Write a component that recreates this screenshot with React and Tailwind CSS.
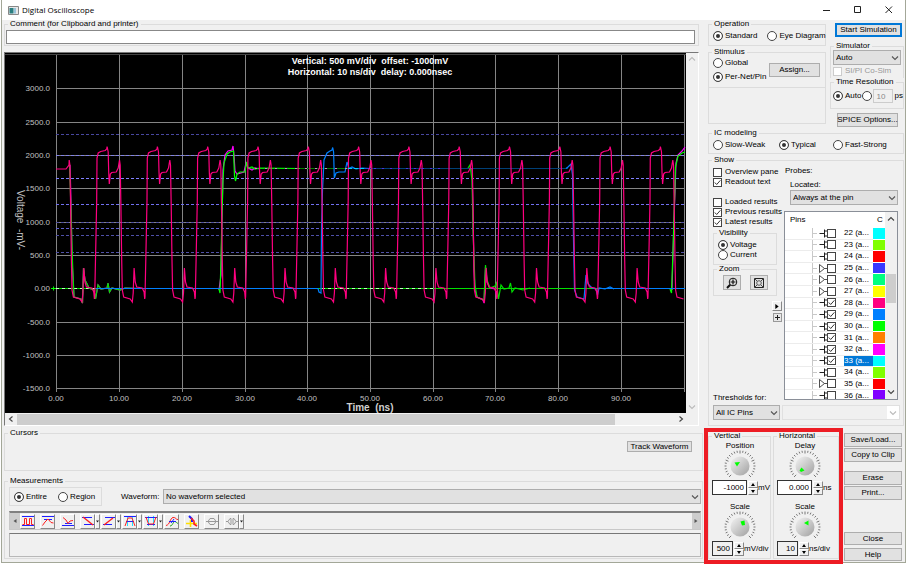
import { useState } from 'react'
import clsx from 'clsx'

const PINS = [
  { id: 22, kind: 'io', on: false, swatch: 'bg-[#00ffff]' },
  { id: 23, kind: 'io', on: false, swatch: 'bg-[#80ff00]' },
  { id: 24, kind: 'io', on: false, swatch: 'bg-[#ff0000]' },
  { id: 25, kind: 'in', on: false, swatch: 'bg-[#3838ff]' },
  { id: 26, kind: 'in', on: false, swatch: 'bg-[#00ff80]' },
  { id: 27, kind: 'in', on: false, swatch: 'bg-[#ffff00]' },
  { id: 28, kind: 'io', on: true, swatch: 'bg-[#ff0080]' },
  { id: 29, kind: 'io', on: true, swatch: 'bg-[#0080ff]' },
  { id: 30, kind: 'io', on: true, swatch: 'bg-[#00ff00]' },
  { id: 31, kind: 'io', on: true, swatch: 'bg-[#ff8000]' },
  { id: 32, kind: 'io', on: true, swatch: 'bg-[#ff00ff]' },
  { id: 33, kind: 'io', on: true, swatch: 'bg-[#00ffff]' },
  { id: 34, kind: 'io', on: false, swatch: 'bg-[#80ff00]' },
  { id: 35, kind: 'in', on: false, swatch: 'bg-[#ff0000]' },
  { id: 36, kind: 'io', on: false, swatch: 'bg-[#8000ff]' },
]

const Y_TICKS = [
  ['3000.0', 88], ['2500.0', 122], ['2000.0', 155], ['1500.0', 188], ['1000.0', 222],
  ['500.0', 255], ['0.00', 288], ['-500.0', 322], ['-1000.0', 355], ['-1500.0', 388],
]

const X_TICKS = [
  ['0.00', 56], ['10.00', 119], ['20.00', 182], ['30.00', 245], ['40.00', 307], ['50.00', 370],
  ['60.00', 433], ['70.00', 495], ['80.00', 558], ['90.00', 621], ['', 684],
]

const THRESHOLDS = [
  [134, '#4848a0'], [155, '#8080e8'], [178, '#8080ff'], [204, '#7070f0'],
  [222, '#5050a0'], [228, '#6060d0'], [235, '#5050a8'], [252, '#5050a8'],
]

// One bit pair of the clock net, x relative to its rising edge
const CLOCK = [
  [-2, 297], [-1, 250], [0, 200], [0.3, 158], [1.5, 153], [4, 151.5], [8.5, 150.5], [10, 149], [10.4, 146.5],
  [11.5, 152], [12, 172], [12.6, 184], [13.6, 174], [15, 172.5], [19.5, 172], [21.5, 168], [22.8, 160],
  [23.5, 165], [24.2, 205], [25, 260], [25.6, 290], [27, 297], [33.5, 299], [35.6, 302], [36.5, 293],
  [37.4, 268], [38.5, 282], [40, 287], [45.5, 288], [47.4, 292], [48, 299],
]

const toPoints = (pts) => pts.map((p) => p.join(',')).join(' ')

const clockPoints = () => {
  const pts = [[56, 169], [66, 169], [69, 165]]
  for (let n = -1; n < 12; n++) {
    const rise = 96.7 + n * 50.3
    for (const [dx, y] of CLOCK) {
      const x = Math.round((rise + dx) * 10) / 10
      if (x > 69 && x < 685) pts.push([x, y])
    }
  }
  return toPoints(pts)
}

const SETTLE = '74,297 81,299 82.5,303 83.5,268 85,280 89,288 94,290 95.5,299 98,285 101,289 107,288 108,283 109.5,292 112,288 120,290 125,288 140,288.5'

function Group({ title, className, children }) {
  return (
    <fieldset className={clsx('min-w-0 border border-[#dcdcdc]', className)}>
      <legend className="ml-[3px] h-[8px] px-[2px] leading-[8px]">{title}</legend>
      {children}
    </fieldset>
  )
}

function Radio({ name, label, checked, className }) {
  return (
    <label className={clsx('flex items-center gap-[2px] whitespace-nowrap', className)}>
      <input
        type="radio"
        name={name}
        defaultChecked={checked}
        className="size-[10px] shrink-0 appearance-none rounded-full border border-[#444] bg-white checked:bg-[#333] checked:shadow-[inset_0_0_0_2px_white]"
      />
      {label}
    </label>
  )
}

function Tick({ checked, disabled, label }) {
  return (
    <span className="relative grid size-[9px] shrink-0">
      <input
        type="checkbox"
        aria-label={label}
        defaultChecked={checked}
        disabled={disabled}
        className="peer size-[9px] appearance-none border border-[#444] bg-white disabled:border-[#ccc]"
      />
      <svg viewBox="0 0 9 9" className="pointer-events-none absolute inset-0 hidden size-[9px] peer-checked:block">
        <path d="M1.8 4.5 L3.7 6.5 L7.4 2.3" fill="none" stroke="#333" strokeWidth="1" />
      </svg>
    </span>
  )
}

function Check({ label, checked, disabled }) {
  return (
    <label className={clsx('flex h-[10px] items-center gap-[3px] whitespace-nowrap', disabled && 'text-[#999]')}>
      <Tick checked={checked} disabled={disabled} />
      {label}
    </label>
  )
}

function Chevron({ className, d = 'M1 2.5 L4 5.5 L7 2.5' }) {
  return (
    <svg viewBox="0 0 8 8" className={clsx('size-[8px]', className)}>
      <path d={d} fill="none" stroke="currentColor" strokeWidth="1.1" />
    </svg>
  )
}

function Combo({ label, value, className }) {
  return (
    <span className={clsx('relative flex h-[15px]', className)}>
      <select aria-label={label} className="w-full appearance-none border border-[#adadad] bg-[#e1e1e1] pl-[2px]">
        <option>{value}</option>
      </select>
      <Chevron className="pointer-events-none absolute top-[4px] right-[2px] text-[#555]" />
    </span>
  )
}

function Button({ className, children, ...rest }) {
  return (
    <button
      type="button"
      className={clsx('flex items-center justify-center border border-[#adadad] bg-[#e1e1e1] whitespace-nowrap', className)}
      {...rest}
    >
      {children}
    </button>
  )
}

function Plot() {
  return (
    <svg viewBox="5 53 681 360" className="block min-w-0 flex-1 bg-black" role="img" aria-label="Waveform plot">
      <g stroke="#858585" strokeWidth="1">
        {Y_TICKS.map(([label, y]) => (
          <line key={label} x1="56" x2="685" y1={y + 0.5} y2={y + 0.5} />
        ))}
        {X_TICKS.map(([label, x]) => (
          <line key={x} x1={x + 0.5} x2={x + 0.5} y1="54" y2="392" />
        ))}
        <line x1="5" x2="686" y1="54.5" y2="54.5" stroke="#444" />
      </g>
      {THRESHOLDS.map(([y, color]) => (
        <line key={y} x1="56" x2="685" y1={y + 0.5} y2={y + 0.5} stroke={color} strokeDasharray="3 2" />
      ))}

      <g fill="none" strokeWidth="1.2">
        {/* flat levels */}
        <path d="M250 168.5H350" stroke="#008000" />
        <path d="M348 168.5H568" stroke="#004078" />
        <path d="M56 288.5H685" stroke="#00e000" />
        <path d="M56 288.5H96M322 288.5H436" stroke="#c0ffc0" strokeDasharray="3 3" />
        {/* 32: magenta */}
        <polyline stroke="#e000e0" points={`70,165 71,200 72,260 ${SETTLE}`} />
        <polyline
          stroke="#ff00ff"
          points="219,290 221,275 222,220 223,170 225,155 228,151 232,150 233,146 234,155 235,171 237,174 244,172 246,163 248,168 252,170 255,168 260,169"
        />
        <polyline stroke="#e000e0" points="472,168 473,210 474,270 475,290 477,297 483,300 484,303 485.5,267 487,282 490,288 495,289 497,297" />
        <polyline stroke="#ff00ff" points="672,290 674,220 676,163 678,155 682,151 685,147" />
        {/* 30: green */}
        <polyline stroke="#00e000" points={`69.5,164 71,210 72.5,262 ${SETTLE}`} />
        <polyline
          stroke="#00ff00"
          points="219,289 220,293 221,260 222,215 223,180 224,163 227,154 230,152 233.5,151 234.5,176 235.5,181 237,174 240,172 245,172 246.5,162 248,168 252,167 255,169 260,168 300,168.5"
        />
        <polyline
          stroke="#00e000"
          points="468,168 470,165 472,180 473,230 475,285 477,297 484,300 485.5,265 487,280 490,288 495,286 496.5,283 498.5,299 501,285 504,289 509,288 510.5,283 512,292 515,288 523,290 530,288"
        />
        <polyline stroke="#00ff00" points="670,289 671.5,293 673,250 674.5,200 675.5,167 678,156 682,153 685,152" />
        {/* 29: blue */}
        <path d="M96 288.5H318M600 288.5H685" stroke="#0080ff" />
        <polyline
          stroke="#0080ff"
          points="318,288.5 319,292 321,293 321.5,230 322.5,190 324,160 327,153 330,151 332,150 332.7,147.5 333.6,152 334.3,178 336,173 339,172 345,172 347,162 349,168.5 352,167 356,169 362,168 370,168.5"
        />
        <polyline
          stroke="#0080ff"
          points="566,168.5 568,167 571,164 572.5,175 573.5,240 574.5,290 577,297 584,299 586,275 588,284 592,288 596,289 597.5,295 599,288 605,289 610,287 614,289"
        />
        {/* 28: pink clock */}
        <polyline stroke="#ff0080" points={clockPoints()} />
        <path d="M348 168.5H366" stroke="#00d0ff" strokeDasharray="4 2" />
        <path d="M366 168.5H440" stroke="#5030e0" strokeDasharray="2 6" />
        <path d="M255 168.5H348" stroke="#d070d0" strokeDasharray="2 8" />
      </g>
      <path d="M51 288.5H56M53.5 286.5V290.5" stroke="#00ff00" />

      <g className="text-[8px]" fill="#c0c0c0">
        {Y_TICKS.map(([label, y]) => (
          <text key={label} x="50" y={y + 3} textAnchor="end">{label}</text>
        ))}
        {X_TICKS.map(([label, x]) => (
          <text key={x} x={x} y="401" textAnchor="middle">{label}</text>
        ))}
      </g>
      <text x="370" y="411" textAnchor="middle" fill="#d0d0d0" className="text-[10px] font-bold whitespace-pre">
        {'Time  (ns)'}
      </text>
      <text transform="translate(17 190) rotate(90)" fill="#c0c0c0" className="text-[10px] whitespace-pre">
        {'Voltage  -mV-'}
      </text>
      <g fill="#ffffff" className="text-[9px] font-bold">
        <text x="370" y="64" textAnchor="middle" className="whitespace-pre">
          {'Vertical: 500 mV/div  offset: -1000mV'}
        </text>
        <text x="370" y="75" textAnchor="middle" className="whitespace-pre">
          {'Horizontal: 10 ns/div  delay: 0.000nsec'}
        </text>
      </g>
    </svg>
  )
}

const ICONS = {
  period: (
    <>
      <path d="M0 1.5H12M0 10.5H12" stroke="#2020ff" />
      <path d="M0.5 9.5H2.5V3.5H4.5V9.5H7.5V3.5H9.5V9.5H11.5" stroke="#ff2020" />
    </>
  ),
  max: (
    <>
      <path d="M0 1.5H12M2 4.5H10" stroke="#2020ff" />
      <path d="M0.5 10.5L3 7L6 4L9 7.5L11.5 8" stroke="#ff2020" />
    </>
  ),
  min: (
    <>
      <path d="M0 10.5H12M3 8.5H10" stroke="#2020ff" />
      <path d="M1 2.5L4 5L6 8.5L8 6L11 5.5" stroke="#ff2020" />
    </>
  ),
  fall: (
    <>
      <path d="M0 2.5H10M2 9.5H12" stroke="#2020ff" />
      <path d="M1 2L11 10" stroke="#ff2020" strokeWidth="1.4" />
    </>
  ),
  rise: (
    <>
      <path d="M2 2.5H12M0 9.5H9" stroke="#2020ff" />
      <path d="M1 10L10 3" stroke="#ff2020" strokeWidth="1.4" />
    </>
  ),
  highPulse: (
    <>
      <path d="M3.5 1V11M8.5 1V11" stroke="#20e0ff" />
      <path d="M0 1.5H12M2 6.5H10" stroke="#2020ff" />
      <path d="M1 11L4 3H8L11 11" stroke="#ff2020" />
    </>
  ),
  lowPulse: (
    <>
      <path d="M3.5 1V11M8.5 1V11" stroke="#20e0ff" />
      <path d="M0 2.5H12M2 9.5H10" stroke="#2020ff" />
      <path d="M1 2L3.5 9H8.5L11 2" stroke="#ff2020" />
    </>
  ),
  overshoot: (
    <>
      <path d="M0 10.5C4 10 4 3 7 2.5S10 5 12 4.5" stroke="#ff2020" />
      <path d="M4 11C7 11 7 6 9 6.5S11 9 12 8" stroke="#20a020" />
      <path d="M3 6.5H10M5 8L8 4" stroke="#2020ff" />
    </>
  ),
  eye: (
    <>
      <path d="M0 8.5H11M4.5 5V12" stroke="#ffe000" strokeWidth="1.6" />
      <path d="M3 1L6 4V7" stroke="#2020ff" strokeWidth="2" />
      <path d="M5 3L8 6V9L11 11" stroke="#ff2020" strokeWidth="1.6" />
    </>
  ),
  mask: <path d="M0 6.5H12M2 6.5L4 3.5H8L10 6.5L8 9.5H4Z" stroke="#999" />,
  maskSplit: <path d="M0 6.5H2L4 3.5H5V9.5H4L2 6.5M12 6.5H10L8 3.5H7V9.5H8L10 6.5" stroke="#999" />,
}

const TOOLS = [
  { icon: 'period', label: 'Period', gap: 'ml-0' },
  { icon: 'max', label: 'Maximum', gap: 'ml-[5px]' },
  { icon: 'min', label: 'Minimum', gap: 'ml-[5px]' },
  { icon: 'fall', label: 'Fall time', gap: 'ml-[5px]', menu: true },
  { icon: 'rise', label: 'Rise time', gap: 'ml-px', menu: true },
  { icon: 'highPulse', label: 'High pulse', gap: 'ml-px', menu: true },
  { icon: 'lowPulse', label: 'Low pulse', gap: 'ml-px', menu: true },
  { icon: 'overshoot', label: 'Overshoot', gap: 'ml-px' },
  { icon: 'eye', label: 'Eye crossing', gap: 'ml-[5px]' },
  { icon: 'mask', label: 'Eye mask', gap: 'ml-[5px]' },
  { icon: 'maskSplit', label: 'Mask options', gap: 'ml-[5px]', menu: true },
]

const RAISED = 'border border-t-white border-l-white border-r-[#888] border-b-[#888] bg-[#f0f0f0]'

function Toolbar() {
  return (
    <div className="flex h-[19px] border border-t-2 border-[#c8c8c8] border-t-[#808080]">
      <button type="button" aria-label="Scroll tools left" className="grid w-[10px] place-items-center bg-[#cdcdcd]">
        <svg viewBox="0 0 6 6" className="size-[6px]"><path d="M4.5 1V5L1.5 3Z" fill="#555" /></svg>
      </button>
      <div className="flex flex-1 items-center">
        {TOOLS.map(({ icon, label, gap, menu }) => (
          <span key={icon} className={clsx('flex h-[15px]', gap)}>
            <button type="button" aria-label={label} className={clsx('grid w-[15px] place-items-center', RAISED)}>
              <svg viewBox="0 0 12 12" fill="none" className="size-[12px]">{ICONS[icon]}</svg>
            </button>
            {menu && (
              <button type="button" aria-label={`${label} menu`} className={clsx('grid w-[5px] place-items-center', RAISED)}>
                <svg viewBox="0 0 3 3" className="size-[3px]"><path d="M0 0.5H3L1.5 2.5Z" fill="#222" /></svg>
              </button>
            )}
          </span>
        ))}
      </div>
      <button type="button" aria-label="Scroll tools right" className="grid w-[8px] place-items-center bg-[#cdcdcd]">
        <svg viewBox="0 0 6 6" className="size-[6px]"><path d="M1.5 1V5L4.5 3Z" fill="#555" /></svg>
      </button>
    </div>
  )
}

const KNOB_TICKS = Array.from({ length: 25 }, (_, i) => {
  const a = ((135 + i * 11.25) * Math.PI) / 180
  const inner = i % 6 === 0 ? 12.5 : 13.5
  return [16 + inner * Math.cos(a), 16 + inner * Math.sin(a), 16 + 15.5 * Math.cos(a), 16 + 15.5 * Math.sin(a)]
})

function Knob({ pointer }) {
  return (
    <svg viewBox="0 0 32 30" className="h-[30px] w-[32px]">
      <defs>
        <linearGradient id="knob" x1="0" y1="0" x2="1" y2="1">
          <stop offset="0" stopColor="#f4f4f4" />
          <stop offset="1" stopColor="#a0a0a0" />
        </linearGradient>
      </defs>
      {KNOB_TICKS.map(([x1, y1, x2, y2], i) => (
        <line key={i} x1={x1} y1={y1} x2={x2} y2={y2} stroke="#555" strokeWidth="0.8" />
      ))}
      <circle cx="16" cy="16" r="9.5" fill="url(#knob)" />
      <path d={pointer} fill="#00ff00" />
    </svg>
  )
}

function Dial({ title, label, value, unit, pointer, wide, readOnly }) {
  return (
    <div className="flex flex-col">
      <div className="flex w-[56px] flex-col items-center">
        <span className="leading-[9px]">{title}</span>
        <Knob pointer={pointer} />
      </div>
      <div className="flex items-center">
        <input
          aria-label={label}
          defaultValue={value}
          readOnly={readOnly}
          className={clsx(
            'h-[15px] border border-[#333] pr-[2px] text-right',
            wide ? 'w-[35px] bg-white' : 'w-[21px] bg-[#f0f0f0]',
          )}
        />
        <span className="ml-px flex w-[10px] flex-col">
          <button type="button" aria-label={`${label} up`} className={clsx('grid h-[7px] place-items-center', RAISED)}>
            <svg viewBox="0 0 4 3" className="h-[3px] w-[4px]"><path d="M0 3H4L2 0Z" /></svg>
          </button>
          <button type="button" aria-label={`${label} down`} className={clsx('grid h-[7px] place-items-center', RAISED)}>
            <svg viewBox="0 0 4 3" className="h-[3px] w-[4px]"><path d="M0 0H4L2 3Z" /></svg>
          </button>
        </span>
        <span className="whitespace-nowrap">{unit}</span>
      </div>
    </div>
  )
}

function PinTable() {
  const [selected, setSelected] = useState(33)
  return (
    <div className="mt-[6px] flex h-[189px] overflow-hidden border border-[#8a8f98] bg-white">
      <table className="h-[190px] flex-1 table-fixed border-collapse">
        <thead>
          <tr className="h-[16px]">
            <th className="pl-[5px] text-left font-normal">Pins</th>
            <th className="w-[12px] pl-[4px] text-left font-normal">C</th>
          </tr>
        </thead>
        <tbody>
          {PINS.map(({ id, kind, on, swatch }) => (
            <tr key={id} onClick={() => setSelected(id)}>
              <td className="border-b border-[#ececec] p-0">
                <div className="flex items-center leading-[10px]">
                  <span className="ml-[27px] h-[10px] w-px bg-[#c8c8c8]" />
                  <span className="h-px w-[4px] bg-[#c8c8c8]" />
                  <svg viewBox="0 0 10 9" fill="none" stroke="#222" className="h-[9px] w-[10px]">
                    {kind === 'in' ? (
                      <path d="M2.5 0.5V8.5L7.5 4.5ZM7.5 4.5H10" strokeWidth="0.8" />
                    ) : (
                      <path d="M2.5 4.5H7.5M7.5 0.5V8.5M10 2H7.5M10 7H7.5" />
                    )}
                  </svg>
                  <Tick checked={on} label={`Pin ${id}`} />
                  <span
                    className={clsx(
                      'ml-[8px] flex-1 whitespace-nowrap',
                      selected === id && 'bg-[#0078d7] text-white',
                    )}
                  >
                    {id} (a...
                  </span>
                </div>
              </td>
              <td className={clsx('border-b border-white p-0', swatch)} />
            </tr>
          ))}
        </tbody>
      </table>
      <div className="flex w-[12px] flex-col items-center bg-[#f0f0f0] py-[3px] text-[#444]">
        <Chevron d="M1 5.5 L4 2.5 L7 5.5" />
        <span className="mt-[51px] h-[29px] w-[10px] bg-[#cdcdcd]" />
        <Chevron className="mt-auto" />
      </div>
    </div>
  )
}

function SignalColumn() {
  return (
    <div className="flex min-w-0 flex-1 flex-col pl-[2px]">
      <Group title="Comment (for Clipboard and printer)" className="mr-[4px] pb-px">
        <input
          aria-label="Comment"
          className="mx-px mt-[2px] block h-[14px] w-[calc(100%-4px)] border border-[#888] bg-white"
        />
      </Group>

      <div className="mt-[6px] mr-[4px] border border-t-[#777] border-r-white border-b-white border-l-[#777]">
        <div className="flex">
          <Plot />
          <div className="flex w-[12px] flex-col items-center justify-between py-[2px] text-[#bbb]">
            <Chevron d="M1 5.5 L4 2.5 L7 5.5" />
            <Chevron />
          </div>
        </div>
        <div className="flex h-[12px] items-center pr-[13px] text-[#444]">
          <Chevron className="mx-[2px]" d="M5.5 1.5 L2.5 4 L5.5 6.5" />
          <span className="mr-auto h-[11px] w-[90%] max-w-[598px] bg-[#cdcdcd]" />
          <Chevron d="M2.5 1.5 L5.5 4 L2.5 6.5" />
        </div>
      </div>

      <Group title="Cursors" className="mt-[3px] h-[42px]">
        <div className="flex justify-end pt-[4px] pr-[10px]">
          <Button className="h-[11px] w-[65px]">Track Waveform</Button>
        </div>
      </Group>

      <Group title="Measurements" className="mt-[6px] pb-px">
        <div className="flex flex-col pt-[2px] pr-px pl-[4px]">
          <div className="flex items-center">
            <div className="flex h-[19px] w-[93px] items-center gap-[11px] border border-[#dcdcdc] pl-[4px]">
              <Radio name="range" label="Entire" checked />
              <Radio name="range" label="Region" />
            </div>
            <span className="ml-[19px] w-[42px]">Waveform:</span>
            <Combo label="Waveform" value="No waveform selected" className="flex-1" />
          </div>
          <div className="mt-[5px]"><Toolbar /></div>
          <div className="mt-[3px] h-[24px] border border-[#b8b8b8] border-t-[#777]" />
        </div>
      </Group>
    </div>
  )
}

function ControlColumn() {
  return (
    <div className="flex w-[201px] shrink-0 flex-col pr-px pl-[4px]">
      <div className="flex gap-[4px]">
        <div className="w-[118px] shrink-0">
          <Group title="Operation" className="h-[26px]">
            <div className="flex h-[16px] items-center gap-[10px] pl-[4px]">
              <Radio name="operation" label="Standard" checked />
              <Radio name="operation" label="Eye Diagram" />
            </div>
          </Group>
          <Group title="Stimulus" className="mt-[2px] h-[40px]">
            <div className="flex items-center justify-between pt-[2px] pr-[5px] pl-[4px]">
              <div className="flex flex-col gap-[4px]">
                <Radio name="stimulus" label="Global" />
                <Radio name="stimulus" label="Per-Net/Pin" checked />
              </div>
              <Button className="h-[14px] w-[51px]">Assign...</Button>
            </div>
          </Group>
          <div className="h-[36px] border border-t-0 border-[#dcdcdc]" />
        </div>
        <div className="flex min-w-0 flex-1 flex-col">
          <button
            type="button"
            className="mt-[3px] mr-[2px] ml-[5px] h-[14px] border-2 border-[#0078d7] bg-[#e1e1e1] leading-[10px] whitespace-nowrap"
          >
            Start Simulation
          </button>
          <Group title="Simulator" className="mt-[5px] h-[36px] border-b-0">
            <div className="flex flex-col gap-px px-[2px]">
              <Combo label="Simulator" value="Auto" />
              <Check label="SI/PI Co-Sim" disabled />
            </div>
          </Group>
          <Group title="Time Resolution" className="h-[31px]">
            <div className="flex h-[20px] items-center gap-px pl-[2px]">
              <Radio name="resolution" label="Auto" checked />
              <Radio name="resolution" />
              <input
                aria-label="Time resolution"
                defaultValue="10"
                disabled
                className="h-[14px] w-[20px] border border-[#ccc] pl-[2px] text-[#888]"
              />
              ps
            </div>
          </Group>
          <Button className="mt-[4px] ml-[7px] h-[14px] w-[61px]">SPICE Options...</Button>
        </div>
      </div>

      <Group title="IC modeling" className="mt-[2px] h-[25px]">
        <div className="grid h-[15px] grid-cols-[66px_54px_1fr] items-center pl-[4px]">
          <Radio name="modeling" label="Slow-Weak" />
          <Radio name="modeling" label="Typical" checked />
          <Radio name="modeling" label="Fast-Strong" />
        </div>
      </Group>

      <Group title="Show" className="mt-[2px] h-[270px]">
        <div className="flex gap-[2px] pt-[2px] pr-[5px]">
          <div className="flex w-[73px] flex-col pt-px pl-[4px]">
            <Check label="Overview pane" />
            <Check label="Readout text" checked />
            <div className="mt-[10px]">
              <Check label="Loaded results" />
              <Check label="Previous results" checked />
              <Check label="Latest results" checked />
            </div>
            <Group title="Visibility" className="mt-[2px] mr-[5px] h-[36px]">
              <div className="flex flex-col pt-[3px] pl-[4px]">
                <Radio name="visibility" label="Voltage" checked />
                <Radio name="visibility" label="Current" />
              </div>
            </Group>
            <Group title="Zoom" className="mr-[5px] h-[31px]">
              <div className="flex justify-center gap-[9px] pt-[2px]">
                <Button className="h-[15px] w-[18px]" aria-label="Zoom in">
                  <svg viewBox="0 0 12 12" fill="none" stroke="#111" className="size-[12px]">
                    <circle cx="7" cy="5" r="3.8" />
                    <path d="M4.5 5H9.5M7 2.5V7.5" strokeWidth="1.2" />
                    <path d="M4.2 7.8L1 11" strokeWidth="2" />
                  </svg>
                </Button>
                <Button className="h-[15px] w-[18px]" aria-label="Zoom to fit">
                  <svg viewBox="0 0 12 12" fill="none" stroke="#222" className="size-[12px]">
                    <path d="M1.5 1.5H10.5V10.5H1.5Z" />
                    <circle cx="6" cy="6" r="2.3" strokeWidth="0.7" />
                    <path d="M2 2L4 4M10 2L8 4M2 10L4 8M10 10L8 8" strokeWidth="0.8" />
                  </svg>
                </Button>
              </div>
            </Group>
            <div className="mt-[5px] flex flex-col items-end gap-[2px]">
              <button type="button" aria-label="Expand pins" className={clsx('grid size-[10px] place-items-center', RAISED)}>
                <svg viewBox="0 0 4 6" className="h-[5px] w-[4px]"><path d="M0 0V6L4 3Z" /></svg>
              </button>
              <button type="button" aria-label="Add pin" className="grid size-[9px] place-items-center border border-[#999] bg-[#e8e8e8]">
                <svg viewBox="0 0 5 5" className="size-[5px]"><path d="M0 2.5H5M2.5 0V5" stroke="#222" /></svg>
              </button>
            </div>
            <span className="mt-auto -mb-[3px]">Thresholds for:</span>
          </div>
          <div className="flex min-w-0 flex-1 flex-col">
            <span className="pl-px leading-[10px]">Probes:</span>
            <span className="mt-[4px] pl-[6px] leading-[10px]">Located:</span>
            <Combo label="Located" value="Always at the pin" className="ml-[6px]" />
            <PinTable />
          </div>
        </div>
        <div className="flex gap-[2px] pt-[5px] pr-[3px] pl-[4px]">
          <Combo label="Thresholds for" value="All IC Pins" className="w-[67px]" />
          <span className="relative flex h-[15px] flex-1">
            <select aria-label="Threshold pin" disabled className="w-full appearance-none border border-[#e0e0e0] bg-[#f0f0f0]" />
            <span className="absolute inset-y-px right-px flex w-[12px] items-center justify-center bg-white text-[#bbb]">
              <Chevron />
            </span>
          </span>
        </div>
      </Group>

      <div className="mt-[2px] -mb-[2px] -ml-[4px] flex">
        <div className="flex h-[136px] w-[139px] gap-[2px] border-4 border-[#ed1c24] pb-px">
          <Group title="Vertical" className="w-[63px]">
            <div className="flex flex-col gap-[7px] pt-px pl-[3px]">
              <Dial title="Position" label="Vertical position" value="-1000" unit="mV" pointer="M10.5 12.5L16 12L13 16.5Z" wide />
              <Dial title="Scale" label="Vertical scale" value="500" unit="mV/div" pointer="M16.5 10.5L20.5 9.5L21 14L18 14.5Z" readOnly />
            </div>
          </Group>
          <Group title="Horizontal" className="flex-1">
            <div className="flex flex-col gap-[7px] pt-px pl-[3px]">
              <Dial title="Delay" label="Horizontal delay" value="0.000" unit="ns" pointer="M12.5 17.5L15.5 20.5L12 22L10.5 20.5Z" wide />
              <Dial title="Scale" label="Horizontal scale" value="10" unit="ns/div" pointer="M15 12L19.5 9.5L19.5 14.5Z" readOnly />
            </div>
          </Group>
        </div>
        <div className="ml-px flex w-[58px] flex-col pt-[5px] pb-[3px]">
          <Button className="h-[14px]">Save/Load...</Button>
          <Button className="mt-px h-[14px]">Copy to Clip</Button>
          <Button className="mt-[9px] h-[14px]">Erase</Button>
          <Button className="mt-px h-[14px]">Print...</Button>
          <Button className="mt-auto h-[13px]">Close</Button>
          <Button className="mt-[3px] h-[13px]">Help</Button>
        </div>
      </div>
    </div>
  )
}

export default function App() {
  return (
    <div className="min-h-screen bg-white pr-[5px] pl-px font-['Liberation_Sans',Arial,sans-serif] text-[8px] leading-[10px] text-black">
      <div className="border-r border-b border-l border-[#a3a798] bg-[#f0f0f0]">
        <header className="flex h-[20px] items-center bg-white pr-[11px] pl-[6px]">
          <svg viewBox="0 0 11 9" className="h-[9px] w-[11px]">
            <path d="M0.5 0.5H10.5V8.5H0.5Z" fill="#e8e8e8" stroke="#888" />
            <path d="M1.5 2H5.5V7.5H1.5Z" fill="#2a7f80" />
            <path d="M6.5 2H7.5V7.5H6.5Z" fill="#4a9fd0" />
          </svg>
          <h1 className="ml-[3px] font-['Open_Sans',sans-serif] text-[8px]">Digital Oscilloscope</h1>
          <div className="ml-auto flex gap-[21px]">
            <button type="button" aria-label="Minimize">
              <svg viewBox="0 0 10 10" className="size-[10px]"><path d="M1 5.5H8" stroke="#222" /></svg>
            </button>
            <button type="button" aria-label="Maximize">
              <svg viewBox="0 0 10 10" className="size-[10px]"><path d="M1.5 1.5H7.5V7.5H1.5Z" fill="none" stroke="#222" /></svg>
            </button>
            <button type="button" aria-label="Close window">
              <svg viewBox="0 0 10 10" className="size-[10px]"><path d="M1.5 1.5L8 8M8 1.5L1.5 8" stroke="#222" /></svg>
            </button>
          </div>
        </header>
        <main className="flex gap-px">
          <SignalColumn />
          <ControlColumn />
        </main>
      </div>
    </div>
  )
}
